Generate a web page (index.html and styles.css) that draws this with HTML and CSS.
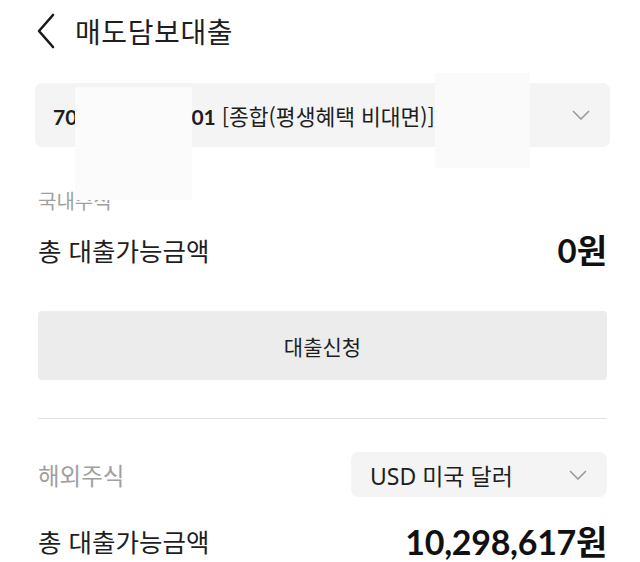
FILE: index.html
```html
<!DOCTYPE html>
<html lang="ko">
<head>
<meta charset="utf-8">
<link rel="stylesheet" href="styles.css">
</head>
<body>
<div class="page">
  <header class="header">
    <svg class="back" width="20" height="36" viewBox="0 0 20 36"><path d="M17 2 L3 18 L17 34" fill="none" stroke="#1a1a1a" stroke-width="2.6" stroke-linecap="round" stroke-linejoin="round"/></svg>
    <h1 class="title">매도담보대출</h1>
  </header>

  <main class="main">
    <div class="account">
      <span class="acc-text"><b class="num">70</b><span class="gap"></span><b class="num">01</b> [종합(평생혜택 비대면)]</span>
      <svg class="chev" width="18" height="10" viewBox="0 0 18 10"><path d="M1 1 L9 9 L17 1" fill="none" stroke="#9a9a9a" stroke-width="1.6"/></svg>
    </div>

    <div class="label-domestic">국내주식</div>

    <div class="total-row first">
      <span class="total-label">총 대출가능금액</span>
      <span class="amount small">0원</span>
    </div>

    <button class="apply">대출신청</button>

    <hr class="divider">

    <div class="foreign-row">
      <span class="label-foreign">해외주식</span>
      <div class="currency">
        <span>USD 미국 달러</span>
        <svg class="chev" width="18" height="10" viewBox="0 0 18 10"><path d="M1 1 L9 9 L17 1" fill="none" stroke="#9a9a9a" stroke-width="1.6"/></svg>
      </div>
    </div>

    <div class="total-row second">
      <span class="total-label">총 대출가능금액</span>
      <span class="amount big">10,298,617원</span>
    </div>
  </main>

  <div class="redact r1"></div>
  <div class="redact r2"></div>
</div>
</body>
</html>
```
FILE: styles.css
```css
* { box-sizing: border-box; }
html, body { margin: 0; padding: 0; background: #fff; }
body {
  font-family: "Noto Sans CJK KR", "Noto Sans", sans-serif;
  color: #1e1e1e;
  width: 640px;
  height: 562px;
  overflow: hidden;
}
.page { position: relative; width: 640px; height: 562px; }

.header {
  display: flex;
  align-items: center;
  height: 62px;
  padding-left: 36px;
}
.back { display: block; margin-right: 19px; }
.title {
  margin: 0;
  font-size: 28px;
  font-weight: 400;
  letter-spacing: 0.6px;
  color: #1e1e1e;
}

.main { padding: 0 33px 0 38px; }

.account {
  margin: 21px -3px 0 -3px;
  height: 64px;
  background: #f4f4f4;
  border-radius: 7px;
  display: flex;
  align-items: center;
  justify-content: space-between;
  padding: 0 20px 0 18px;
}
.acc-text { font-size: 21.5px; color: #1e1e1e; white-space: nowrap; letter-spacing: 0; }
.num { font-family: Lato, "Noto Sans CJK KR", sans-serif; font-weight: 700; font-size: 21px; }
.gap { display: inline-block; width: 114px; }
.chev { display: block; }

.label-domestic {
  margin-top: 43px;
  height: 22px;
  font-size: 20px;
  line-height: 22px;
  color: #a0a0a0;
}

.total-row {
  display: flex;
  justify-content: space-between;
  align-items: center;
}
.total-row.first { margin-top: 17px; height: 40px; }
.total-label { font-size: 25.5px; color: #1e1e1e; }
.amount {
  font-family: Lato, "Noto Sans CJK KR", sans-serif;
  font-weight: 700;
  color: #111;
}
.amount.small { font-size: 33px; }
.amount.big { font-size: 34px; letter-spacing: -0.3px; }

.apply {
  display: block;
  width: 100%;
  margin-top: 42px;
  height: 69px;
  border: 0;
  border-radius: 4px;
  background: #ececec;
  font-family: "Noto Sans CJK KR", sans-serif;
  font-size: 21px;
  color: #1e1e1e;
}

.divider {
  margin: 38px 0 0 0;
  border: 0;
  border-top: 1px solid #e2e2e2;
}

.foreign-row {
  margin-top: 33px;
  display: flex;
  justify-content: space-between;
  align-items: center;
}
.label-foreign { font-size: 23.5px; color: #a0a0a0; }
.currency {
  width: 256px;
  height: 45px;
  background: #f4f4f4;
  border-radius: 8px;
  display: flex;
  align-items: center;
  justify-content: space-between;
  padding: 0 20px 0 19px;
  font-size: 23px;
  color: #1e1e1e;
}
.currency span { font-family: "Noto Sans", "Noto Sans CJK KR", sans-serif; }

.total-row.second { margin-top: 20px; height: 46px; }

.redact { position: absolute; }
.r1 { left: 75px; top: 87px; width: 117px; height: 113px; background: #fbfbfb; }
.r2 { left: 435px; top: 73px; width: 95px; height: 95px; background: #fafafa; }
```
